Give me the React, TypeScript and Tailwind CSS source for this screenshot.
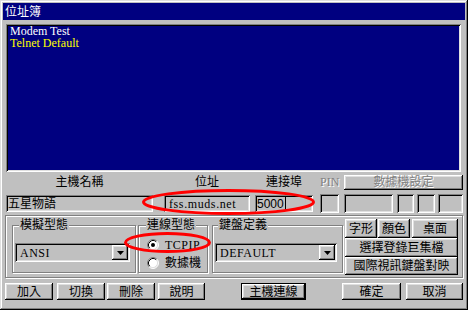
import React from 'react';

const raised =
  'bg-[#c0c0c0] shadow-[inset_-1px_-1px_0_#000,inset_1px_1px_0_#fff,inset_-2px_-2px_0_#808080,inset_2px_2px_0_#dfdfdf]';
const sunken =
  'bg-[#c0c0c0] shadow-[inset_1px_1px_0_#808080,inset_-1px_-1px_0_#fff,inset_2px_2px_0_#000,inset_-2px_-2px_0_#dfdfdf]';
const etched = 'border border-[#808080] shadow-[1px_1px_0_#fff,inset_1px_1px_0_#fff]';
const disabledText = 'text-[#808080] [text-shadow:1px_1px_0_#fff]';

const Btn: React.FC<{ label: string; className?: string }> = ({ label, className = '' }) => (
  <button className={`${raised} flex items-center justify-center leading-none text-black ${className}`}>
    {label}
  </button>
);

const Combo: React.FC<{ value: string; className?: string }> = ({ value, className = '' }) => (
  <div className={`${sunken} flex items-center h-[19px] pl-[5px] pr-[2px] ${className}`}>
    <span className="flex-1 tracking-[0.5px] leading-none">{value}</span>
    <div className={`${raised} w-[16px] h-[15px] flex items-center justify-center`}>
      <svg width="7" height="4" viewBox="0 0 7 4">
        <path d="M0 0h7L3.5 4z" fill="#000" />
      </svg>
    </div>
  </div>
);

const Radio: React.FC<{ checked?: boolean }> = ({ checked }) => (
  <svg width="12" height="12" viewBox="0 0 12 12">
    <circle cx="6" cy="6" r="5" fill="#fff" />
    <path d="M2.11 9.89A5.5 5.5 0 0 1 9.89 2.11" stroke="#808080" fill="none" />
    <path d="M9.89 2.11A5.5 5.5 0 0 1 2.11 9.89" stroke="#fff" fill="none" />
    <path d="M2.82 9.18A4.5 4.5 0 0 1 9.18 2.82" stroke="#000" fill="none" />
    <path d="M9.18 2.82A4.5 4.5 0 0 1 2.82 9.18" stroke="#dfdfdf" fill="none" />
    {checked && <circle cx="6" cy="6" r="2" fill="#000" />}
  </svg>
);

export default function App() {
  return (
    <div className="relative w-[468px] h-[310px] overflow-hidden bg-[#c0c0c0] p-[3px] font-['Liberation_Serif','Noto_Sans_CJK_TC',serif] text-[12px] text-black shadow-[inset_-1px_-1px_0_#000,inset_1px_1px_0_#dfdfdf,inset_-2px_-2px_0_#808080,inset_2px_2px_0_#fff]">
      {/* Title bar */}
      <div className="h-[17px] bg-[#000080] text-white flex items-center pl-[2px] leading-none">位址簿</div>

      <div className="pl-[3px] pt-[4px]">
        {/* Host list */}
        <div className="w-[455px] h-[148px] bg-[#000080] pl-[4px] pt-[1px] leading-[12px] shadow-[inset_1px_1px_0_#808080,inset_-1px_-1px_0_#fff,inset_2px_2px_0_#000,inset_-2px_-2px_0_#dfdfdf]">
          <div className="text-white">Modem Test</div>
          <div className="text-[#ffff00]">Telnet Default</div>
        </div>

        {/* Labels */}
        <div className="flex items-center mt-[2px] h-[16px] leading-none">
          <div className="w-[147px] text-center">主機名稱</div>
          <div className="ml-[11px] w-[86px] text-center">位址</div>
          <div className="ml-[5px] w-[58px] text-center">連接埠</div>
          <div className={`ml-[7px] w-[19px] text-center ${disabledText}`}>PIN</div>
          <button className={`${raised} ml-[5px] w-[119px] h-[15px] flex items-center justify-center leading-none ${disabledText}`}>
            數據機設定
          </button>
        </div>

        {/* Fields */}
        <div className="flex items-start mt-[4px] h-[18px] leading-none">
          <div className={`${sunken} w-[147px] h-[17px] mt-[1px] pl-[2px] flex items-center`}>五星物語</div>
          <div className={`${sunken} ml-[11px] w-[86px] h-[17px] mt-[1px] pl-[5px] flex items-center tracking-[0.6px]`}>
            fss.muds.net
          </div>
          <div className={`${sunken} ml-[5px] w-[58px] h-[17px] mt-[1px] pl-[2px] flex items-center font-['Liberation_Sans',sans-serif]`}>
            5000<span className="ml-[1px] w-[1px] h-[13px] bg-black" />
          </div>
          <div className={`${sunken} ml-[7px] w-[19px] h-[19px]`} />
          <div className={`${sunken} ml-[5px] w-[49px] h-[19px]`} />
          <div className={`${sunken} ml-[4px] w-[17px] h-[19px]`} />
          <div className={`${sunken} ml-[3px] w-[18px] h-[19px]`} />
          <div className={`${sunken} ml-[3px] w-[25px] h-[19px]`} />
        </div>

        {/* Options panel */}
        <div className={`${etched} mt-[3px] ml-[-1px] w-[458px] h-[63px] flex pl-[6px] pt-[3px]`}>
          <fieldset className={`${etched} w-[124px] h-[54px]`}>
            <legend className="ml-[6px] px-[1px] leading-[12px] bg-[#c0c0c0]">模擬型態</legend>
            <Combo value="ANSI" className="ml-[2px] mt-[12px] w-[115px]" />
          </fieldset>

          <fieldset className={`${etched} ml-[2px] w-[70px] h-[54px]`}>
            <legend className="ml-[7px] px-[1px] leading-[12px] bg-[#c0c0c0]">連線型態</legend>
            <div className="flex items-center ml-[8px] mt-[8px] h-[12px] leading-none">
              <Radio checked />
              <span className="ml-[6px] tracking-[0.5px]">TCPIP</span>
            </div>
            <div className="flex items-center ml-[8px] mt-[6px] h-[12px] leading-none">
              <Radio />
              <span className="ml-[6px]">數據機</span>
            </div>
          </fieldset>

          <fieldset className={`${etched} ml-[4px] w-[131px] h-[54px]`}>
            <legend className="ml-[5px] px-[1px] leading-[12px] bg-[#c0c0c0]">鍵盤定義</legend>
            <Combo value="DEFAULT" className="ml-[2px] mt-[12px] w-[122px]" />
          </fieldset>

          <div className="ml-[2px] w-[113px] flex flex-col">
            <div className="flex h-[19px]">
              <Btn label="字形" className="w-[32px]" />
              <Btn label="顏色" className="ml-[1px] w-[32px]" />
              <Btn label="桌面" className="ml-[2px] w-[46px]" />
            </div>
            <Btn label="選擇登錄巨集檔" className="h-[19px] w-full" />
            <Btn label="國際視訊鍵盤對映" className="h-[18px] w-full" />
          </div>
        </div>

        {/* Bottom buttons */}
        <div className="flex mt-[5px] ml-[-1px] h-[17px]">
          <Btn label="加入" className="w-[48px]" />
          <Btn label="切換" className="ml-[4px] w-[48px]" />
          <Btn label="刪除" className="ml-[2px] w-[48px]" />
          <Btn label="說明" className="ml-[3px] w-[47px]" />
          <button className="ml-[36px] w-[65px] bg-[#c0c0c0] flex items-center justify-center leading-none shadow-[inset_0_0_0_1px_#000,inset_-2px_-2px_0_#000,inset_2px_2px_0_#fff,inset_-3px_-3px_0_#808080,inset_3px_3px_0_#dfdfdf]">
            主機連線
          </button>
          <Btn label="確定" className="ml-[36px] w-[59px]" />
          <Btn label="取消" className="ml-[5px] w-[57px]" />
        </div>
      </div>

      {/* Red annotation ellipses */}
      <svg className="absolute inset-0 pointer-events-none" width="468" height="310">
        <ellipse cx="228.5" cy="202" rx="85" ry="11.5" fill="none" stroke="#ff0000" strokeWidth="3" />
        <ellipse cx="167.5" cy="242.5" rx="42" ry="9" fill="none" stroke="#ff0000" strokeWidth="3" />
      </svg>
    </div>
  );
}
